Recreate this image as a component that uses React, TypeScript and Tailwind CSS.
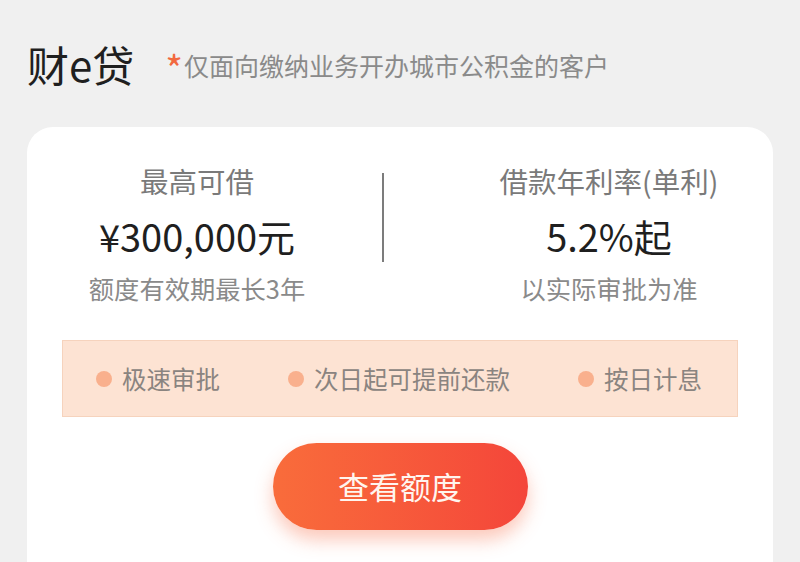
const FONT = { fontFamily: '"Noto Sans CJK SC", "Noto Sans", sans-serif' };

const FEATURES = ["极速审批", "次日起可提前还款", "按日计息"];

export default function App() {
  return (
    <div className="h-[562px] w-[800px] overflow-hidden bg-[#f0f0f0]" style={FONT}>
      {/* header */}
      <div className="flex items-center pl-[27px] pt-[38px]">
        <h1 className="text-[42px] leading-[52px] text-[#1f1f1f]">财e贷</h1>
        <p className="ml-[31px] mt-[2px] flex items-center text-[25px] leading-[30px] text-[#8a8a8a]">
          <span className="mr-[1px] mt-[6px] text-[38px] leading-[30px] text-[#f2693f]">*</span>
          仅面向缴纳业务开办城市公积金的客户
        </p>
      </div>

      {/* card */}
      <div className="mx-[27px] mt-[37px] h-[500px] rounded-[26px] bg-white pt-[36px]">
        <div className="flex items-start">
          <div className="w-[340px] text-center">
            <div className="text-[28.5px] leading-[36px] text-[#7a7a7a]">最高可借</div>
            <div className="mt-[15px] text-[38px] leading-[44px] text-[#1f1f1f]">¥300,000元</div>
            <div className="mt-[13px] text-[25.3px] leading-[34px] text-[#8a8a8a]">额度有效期最长3年</div>
          </div>
          <div className="ml-[15px] mt-[10px] h-[89px] w-[2px] bg-[#7c7c7c]" />
          <div className="ml-[75px] w-[300px] text-center">
            <div className="text-[28.5px] leading-[36px] text-[#7a7a7a]">借款年利率(单利)</div>
            <div className="mt-[15px] text-[38px] leading-[44px] text-[#1f1f1f]">5.2%起</div>
            <div className="mt-[13px] text-[25.3px] leading-[34px] text-[#8a8a8a]">以实际审批为准</div>
          </div>
        </div>

        <div className="mx-[35px] mt-[35px] flex h-[77px] items-center justify-between border border-[#f6d3bd] bg-[#fde3d3] pl-[33px] pr-[35px]">
          {FEATURES.map((f) => (
            <div key={f} className="flex items-center">
              <span className="mt-[1px] h-[16px] w-[16px] rounded-full bg-[#f9b08d]" />
              <span className="ml-[10px] text-[24.5px] leading-[30px] text-[#8a8480]">{f}</span>
            </div>
          ))}
        </div>

        <div className="mt-[26px] flex justify-center">
          <button className="h-[87px] w-[255px] rounded-full bg-gradient-to-r from-[#f96c3b] to-[#f4453a] text-[31px] text-[#fff5ef] shadow-[0_10px_18px_rgba(247,100,60,0.35)]">
            查看额度
          </button>
        </div>
      </div>
    </div>
  );
}
